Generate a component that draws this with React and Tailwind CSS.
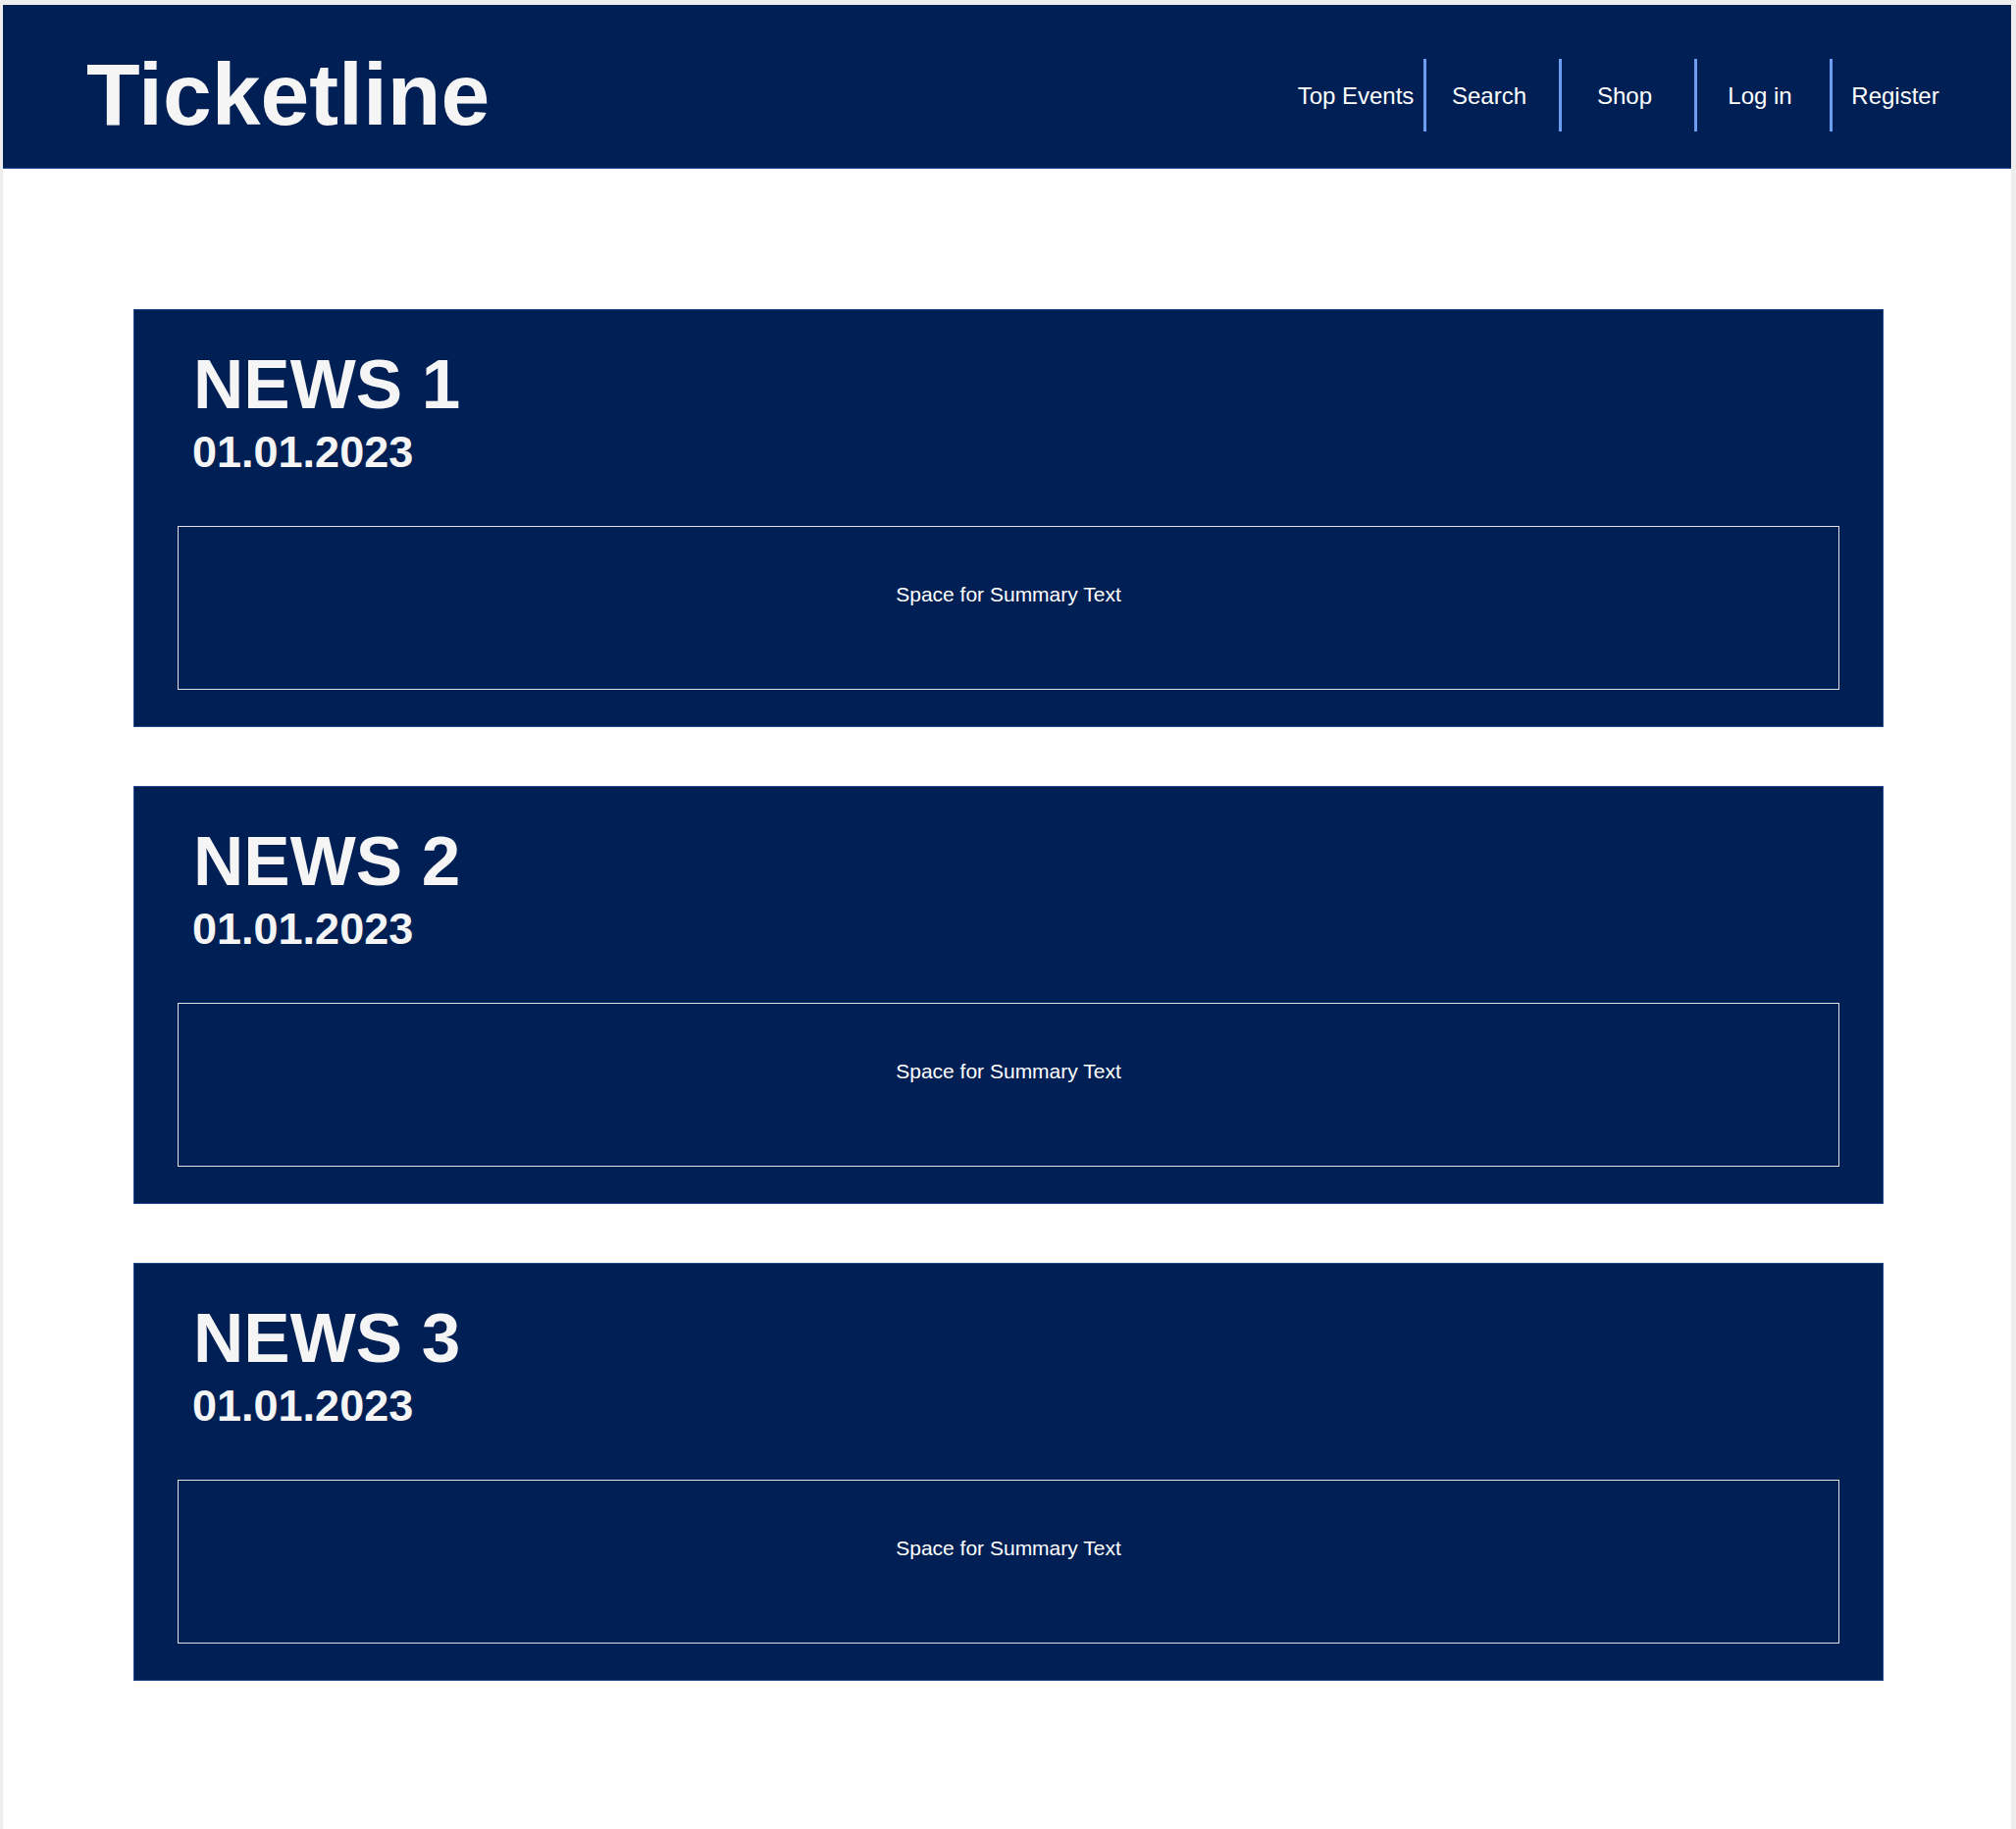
import React from "react";

const navItems = ["Top Events", "Search", "Shop", "Log in", "Register"];

const news = [
  { title: "NEWS 1", date: "01.01.2023" },
  { title: "NEWS 2", date: "01.01.2023" },
  { title: "NEWS 3", date: "01.01.2023" },
];

function Header() {
  return (
    <header className="flex h-[167px] items-center justify-between border-b border-[#1b4c9c] bg-[#001f54] pt-[17px] pl-[85px] pr-[47px]">
      <h1 className="text-[89.5px] font-bold leading-none text-[#f5f5f5]">Ticketline</h1>
      <nav className="flex items-center">
        {navItems.map((item, i) => (
          <a
            key={item}
            href="#"
            className={
              "flex h-[74px] w-[138px] items-center justify-center pt-[3px] text-[24px] text-white" +
              (i > 0 ? " border-l-[3px] border-[#6b9ef0] pr-[7px]" : "")
            }
          >
            {item}
          </a>
        ))}
      </nav>
    </header>
  );
}

function NewsCard({ title, date }) {
  return (
    <div className="ml-[133px] w-[1784px] border border-[#21478c] bg-[#001f54] pt-[40px] pb-[37px]">
      <div className="pl-[57px]">
        <h2 className="pl-[3px] text-[71px] font-bold leading-[72px] text-[#f5f5f5]">{title}</h2>
        <div className="mt-[10px] pl-[2px] text-[45px] font-bold leading-none text-[#f5f5f5]">{date}</div>
      </div>
      <div className="mx-[44px] mt-[53px] h-[167px] border border-[#e2e2e2] pt-[58px] text-center text-[21px] leading-none text-white">
        Space for Summary Text
      </div>
    </div>
  );
}

export default function App() {
  return (
    <div
      className="min-h-screen bg-[#eeeeee] pt-[5px] pl-[3px] pr-[5px]"
      style={{ fontFamily: '"Liberation Sans", Arial, sans-serif' }}
    >
      <div className="min-h-[1859px] bg-white">
        <Header />
        <main className="flex flex-col gap-[60px] pt-[143px] pb-[150px]">
          {news.map((n) => (
            <NewsCard key={n.title} title={n.title} date={n.date} />
          ))}
        </main>
      </div>
    </div>
  );
}
